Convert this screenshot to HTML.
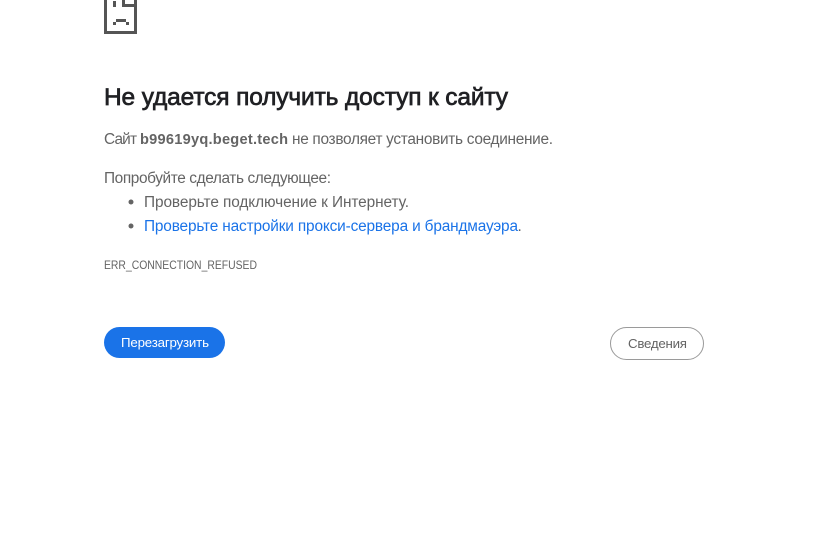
<!DOCTYPE html>
<html lang="ru"><head><meta charset="utf-8"><title>Ошибка</title>
<style>
html,body{margin:0;padding:0;background:#fff;width:826px;height:542px;overflow:hidden}
svg{display:block}
text{font-family:"Liberation Sans","DejaVu Sans",sans-serif;white-space:pre}
.g{fill:#646464;font-size:15.4px}
</style></head><body>
<svg width="826" height="542" viewBox="0 0 826 542" xmlns="http://www.w3.org/2000/svg">
<g fill="#555555">
<rect x="104" y="0" width="3" height="34"/>
<rect x="134" y="0" width="3" height="34"/>
<rect x="104" y="31" width="33" height="3"/>
<rect x="113" y="1" width="3" height="6"/>
<rect x="122" y="0" width="3" height="7"/>
<rect x="122" y="4" width="15" height="3"/>
<rect x="116" y="19" width="10" height="3"/>
<rect x="113" y="22" width="3" height="3"/>
<rect x="126" y="22" width="3" height="3"/>
</g>
<text x="104" y="105" textLength="404" font-size="24.5" fill="#202124" stroke="#202124" stroke-width="0.7">Не удается получить доступ к сайту</text>
<text class="g" x="104" y="144" textLength="33">Сайт</text>
<text class="g" x="140" y="144" textLength="148" style="font-weight:700;font-size:14.6px">b99619yq.beget.tech</text>
<text class="g" x="292" y="144" textLength="261">не позволяет установить соединение.</text>
<text class="g" x="104" y="183" textLength="227">Попробуйте сделать следующее:</text>
<circle cx="131" cy="202" r="2.5" fill="#646464"/>
<text class="g" x="144" y="207" textLength="265">Проверьте подключение к Интернету.</text>
<circle cx="131" cy="226" r="2.5" fill="#646464"/>
<text class="g" x="144" y="231" textLength="374" style="fill:#1a73e8">Проверьте настройки прокси-сервера и брандмауэра</text>
<text class="g" x="517.5" y="231" textLength="3">.</text>
<text x="104" y="269" textLength="153" lengthAdjust="spacingAndGlyphs" font-size="12.4" fill="#646464">ERR_CONNECTION_REFUSED</text>
<rect x="104" y="327" width="121" height="31" rx="15.5" fill="#1a73e8"/>
<text x="121" y="347" textLength="88" font-size="13.3" fill="#fff">Перезагрузить</text>
<rect x="610.5" y="327.5" width="93" height="32" rx="16" fill="#fff" stroke="#9a9a9a"/>
<text x="628" y="348" textLength="59" font-size="13.3" fill="#646464">Сведения</text>
</svg>
</body></html>
